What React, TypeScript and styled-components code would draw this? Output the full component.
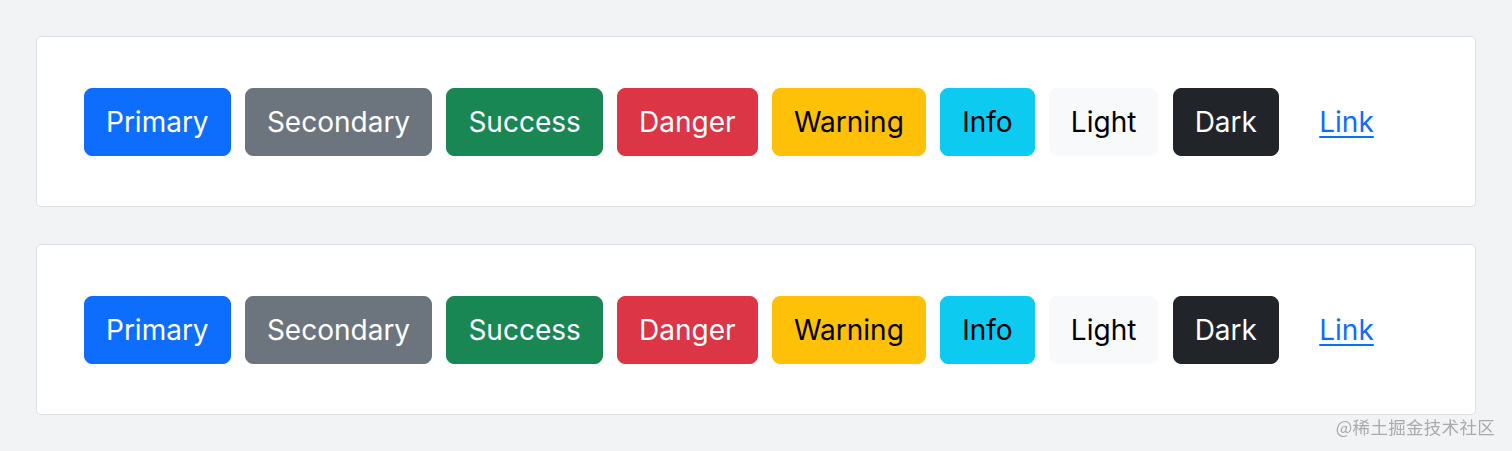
import React from "react";
import styled, { createGlobalStyle } from "styled-components";

const Global = createGlobalStyle`
  html, body { margin: 0; padding: 0; background: #f2f3f5; }
  body { font-family: Inter, "Noto Sans", sans-serif; }
`;

const Page = styled.div`
  display: flex;
  flex-direction: column;
  gap: 37px;
  padding: 36px 36px 0 36px;
  width: 1440px;
`;

const Card = styled.div`
  background: #ffffff;
  border: 1px solid #dcdfe3;
  border-radius: 5px;
  height: 169px;
  padding: 0 47px;
  display: flex;
  align-items: center;
  gap: 14.3px;
`;

const variants: Record<string, { bg: string; fg: string; border: string }> = {
  primary: { bg: "#0d6efd", fg: "#ffffff", border: "#0d6efd" },
  secondary: { bg: "#6c757d", fg: "#ffffff", border: "#6c757d" },
  success: { bg: "#198754", fg: "#ffffff", border: "#198754" },
  danger: { bg: "#dc3545", fg: "#ffffff", border: "#dc3545" },
  warning: { bg: "#ffc107", fg: "#000000", border: "#ffc107" },
  info: { bg: "#0dcaf0", fg: "#000000", border: "#0dcaf0" },
  light: { bg: "#f8f9fa", fg: "#000000", border: "#f8f9fa" },
  dark: { bg: "#212529", fg: "#ffffff", border: "#212529" },
};

const Button = styled.button<{ $v: string }>`
  font-family: Inter, "Noto Sans", sans-serif;
  font-size: 28px;
  line-height: 1.5;
  height: 68px;
  padding: 0 21px;
  border-radius: 8px;
  border: 1px solid ${(p) => variants[p.$v].border};
  background: ${(p) => variants[p.$v].bg};
  color: ${(p) => variants[p.$v].fg};
  font-weight: 400;
  cursor: pointer;
`;

const LinkButton = styled.button`
  font-family: Inter, "Noto Sans", sans-serif;
  font-size: 28px;
  line-height: 1.5;
  height: 68px;
  padding: 0 21px 0 25px;
  border: 1px solid transparent;
  background: transparent;
  color: #0d6efd;
  text-decoration: underline;
  text-underline-offset: 4px;
  text-decoration-thickness: 2px;
  cursor: pointer;
`;

const Watermark = styled.div`
  position: fixed;
  right: 17px;
  top: 414px;
  font-family: "Noto Sans CJK SC", sans-serif;
  font-size: 17.5px;
  color: #a9abae;
  letter-spacing: 0.3px;
`;

const names = ["Primary", "Secondary", "Success", "Danger", "Warning", "Info", "Light", "Dark"];

const Row = () => (
  <Card>
    {names.map((n) => (
      <Button key={n} $v={n.toLowerCase()}>
        {n}
      </Button>
    ))}
    <LinkButton>Link</LinkButton>
  </Card>
);

export default function App() {
  return (
    <>
      <Global />
      <Page>
        <Row />
        <Row />
      </Page>
      <Watermark>@稀土掘金技术社区</Watermark>
    </>
  );
}
